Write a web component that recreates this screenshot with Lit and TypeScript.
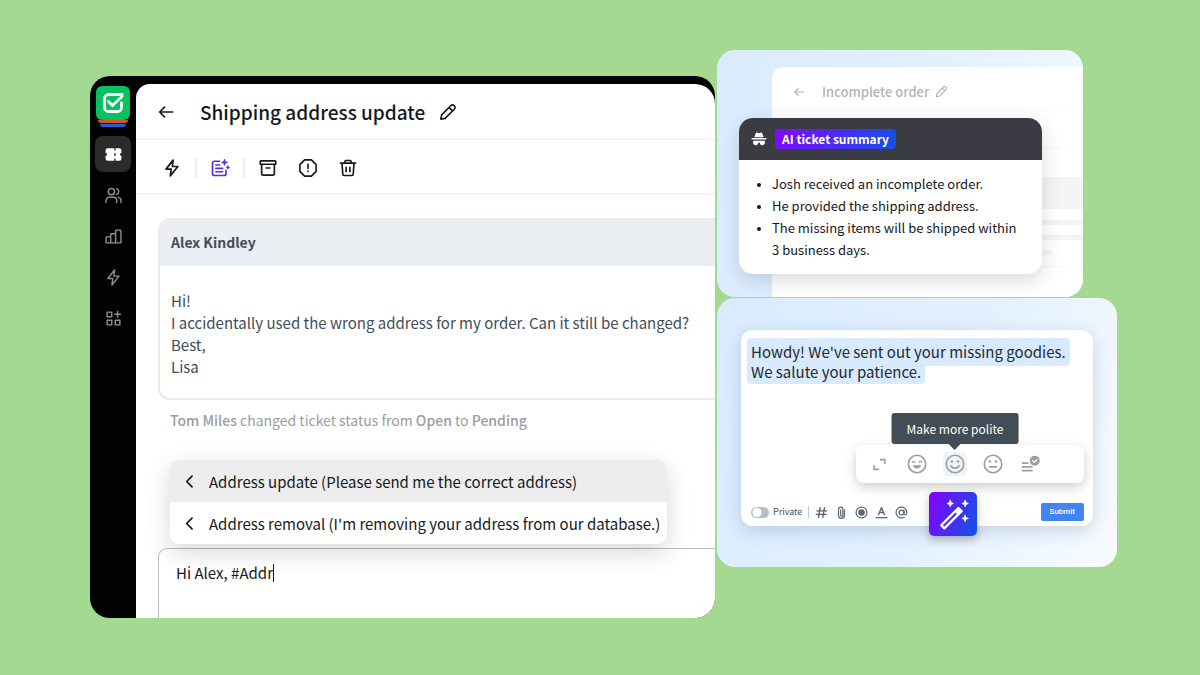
import { LitElement, html, css, svg, nothing } from "lit";
import { customElement, property, state } from "lit/decorators.js";
import { classMap } from "lit/directives/class-map.js";

const glyphs: Record<string, unknown> = {
  back: svg`<path d="M21 12H4M10 5.500L3.500 12l6.500 6.500"/>`,
  pencil: svg`<path d="M2.500 21.500l1-5.700L16 3.300a2.600 2.600 0 0 1 3.700 0l1 1a2.600 2.600 0 0 1 0 3.700L8.200 20.500 2.500 21.500zM13.500 6l4.500 4.500"/>`,
  bolt: svg`<path d="M13.500 1.500L4 13.500h7L9.800 22.500l10-12.500h-7.300z"/>`,
  summary: svg`<path d="M11.500 3H4.500A2.500 2.500 0 0 0 2 5.500v14A2.500 2.500 0 0 0 4.500 22h13a2.500 2.500 0 0 0 2.500-2.500V15M6.500 8h5M6.500 12.500h9M6.500 17h9"/><path d="M18 .5l1.100 2.900L22 4.500l-2.900 1.100L18 8.500l-1.100-2.900L14 4.500l2.900-1.100zM22.500 9l.7 1.600 1.600.7-1.600.7-.7 1.600-.7-1.600-1.600-.7 1.600-.7z" fill="currentColor" stroke-width="1"/>`,
  archive: svg`<path d="M2.500 2.500h19a.8.8 0 0 1 .8.800v3.700H1.700V3.300a.8.8 0 0 1 .8-.8zM3.500 7V19.500a2 2 0 0 0 2 2h13a2 2 0 0 0 2-2V7M9.500 12h5"/>`,
  alert: svg`<path d="M7.500 1.200h9L22.800 7.500v9L16.500 22.800H7.500L1.200 16.500v-9zM12 7v5.500M12 16v.8"/>`,
  trash: svg`<path d="M2 5.500h20M4 5.500l1 14.500a2 2 0 0 0 2 2h10a2 2 0 0 0 2-2l1-14.500M8 5.500V3a1 1 0 0 1 1-1h6a1 1 0 0 1 1 1v2.500M9.500 11v6M14.500 11v6"/>`,
  ticket: svg`<path d="M4.500 4H13v3h1.600V4h4.900A2.500 2.500 0 0 1 22 6.500v3.700a1.800 1.800 0 0 0 0 3.600v3.700a2.500 2.500 0 0 1-2.500 2.500h-4.900v-3H13v3H4.500A2.500 2.500 0 0 1 2 17.500v-3.700a1.800 1.800 0 0 0 0-3.600V6.500A2.500 2.500 0 0 1 4.500 4zM13 10.200v3.600h1.600v-3.600z" fill="currentColor" fill-rule="evenodd" stroke="none"/>`,
  people: svg`<circle cx="9" cy="6.500" r="4.500"/><path d="M1.500 22v-3a4.500 4.500 0 0 1 4.500-4.500h6a4.500 4.500 0 0 1 4.500 4.500v3M16.500 2.300a4.500 4.500 0 0 1 0 8.400M22.500 22v-3a4.500 4.500 0 0 0-3.500-4.300"/>`,
  chart: svg`<path d="M1.500 21V13.500a1 1 0 0 1 1-1h5.500V21zM8 21V9a1 1 0 0 1 1-1h6v13zM15 21V4a1 1 0 0 1 1-1h5.500a1 1 0 0 1 1 1v17z"/>`,
  apps: svg`<path d="M3 3h6.500v6.500H3zM3 14.500h6.500V21H3zM14.500 14.500H21V21h-6.500zM17.800 2v8M13.800 6h8"/>`,
  chevron: svg`<path d="M16 3.500L7.500 12l8.500 8.500"/>`,
  agent: svg`<path d="M7.200 3.200c.6-1.300 1.800-.9 2.600-.4a4 4 0 0 0 4.400 0c.8-.5 2-.9 2.600.4L19 9.500H5zM1 10.500h22v2.200H1zM3.500 14.500h17c1 1.500.5 7-3.700 7-2.500 0-3-2.300-3.500-4h-2.600c-.5 1.700-1 4-3.500 4-4.200 0-4.700-5.500-3.700-7z" fill="currentColor" stroke="none"/>`,
  expand: svg`<path d="M13 3h9v8M11 21H2v-8" stroke-linecap="butt" stroke-linejoin="miter"/>`,
  grin: svg`<circle cx="12" cy="12" r="10.500"/><path d="M6.500 10c.6-1.500 2.200-1.500 2.800 0M14.700 10c.6-1.500 2.200-1.500 2.800 0" stroke-width="1.500"/><path d="M7 13.500h10c-.8 5-9.200 5-10 0z" fill="currentColor" stroke="none"/>`,
  smile: svg`<circle cx="12" cy="12" r="10.500"/><path d="M7 14c1.800 4 8.200 4 10 0"/><circle cx="8.300" cy="9" r="1.600" fill="currentColor" stroke="none"/><circle cx="15.700" cy="9" r="1.600" fill="currentColor" stroke="none"/>`,
  neutral: svg`<circle cx="12" cy="12" r="10.500"/><path d="M8 15.500h8"/><circle cx="8.300" cy="9" r="1.600" fill="currentColor" stroke="none"/><circle cx="15.700" cy="9" r="1.600" fill="currentColor" stroke="none"/>`,
  check: svg`<path d="M1 11h8M1 15.500h13M1 20h13" stroke-linecap="butt"/><circle cx="16.500" cy="8" r="6" fill="currentColor" stroke="none"/><path d="M13.900 8l2 2 3.400-3.600" stroke="#fff" stroke-width="1.500"/>`,
  hash: svg`<path d="M9.500 3L6.500 21M17.500 3l-3 18M3.500 9h18M2.500 15.500h18" stroke-width="2.600"/>`,
  clip: svg`<path d="M17.500 7v10.500a5.500 5.500 0 0 1-11 0V6a4 4 0 0 1 8 0v11a2 2 0 0 1-4 0V7"/>`,
  record: svg`<circle cx="12" cy="12" r="10"/><circle cx="12" cy="12" r="6" fill="currentColor" stroke="none"/>`,
  format: svg`<path d="M6.500 16L12 3l5.500 13M8.500 12h7M2 21.500h20" stroke-width="2.500"/>`,
  at: svg`<circle cx="12" cy="12" r="4.500"/><path d="M16.500 7.500v6c0 4 5.500 3.500 5.500-1.500a10 10 0 1 0-5 8.700"/>`,
  logo: svg`<path d="M20.500 12v4.500a4 4 0 0 1-4 4h-9a4 4 0 0 1-4-4v-9a4 4 0 0 1 4-4h13.500v2l-9.500 9-4-4" stroke-width="2.800" stroke-linejoin="miter"/>`,
  wand: svg`<path d="M2.500 20.300L15.800 7l2.400 2.400L4.900 22.700z" stroke-width="1.800"/><path d="M12.600 9.500l3.300-3.300 3.200 3.200-3.300 3.300z" fill="currentColor" stroke="none"/><path d="M9.500 1l.7 1.800 1.800.7-1.800.7-.7 1.800-.7-1.800L7 3.500l1.800-.7zM21 1l.7 1.800 1.800.7-1.800.7-.7 1.800-.7-1.800-1.800-.7 1.800-.7zM21 12.500l.7 1.800 1.800.7-1.800.7-.7 1.800-.7-1.800-1.800-.7 1.800-.7z" fill="currentColor" stroke-width=".6"/>`,
};

@customElement("ui-icon")
export class UiIcon extends LitElement {
  static styles = css`
    :host { display: inline-flex; flex: none; width: var(--icon, 20px); height: var(--icon, 20px); }
    svg { width: 100%; height: 100%; overflow: visible; fill: none; stroke: currentColor; stroke-width: var(--stroke, 2); stroke-linecap: round; stroke-linejoin: round; }
  `;
  @property() name = "";
  render() {
    return html`<svg viewBox="0 0 24 24" aria-hidden="true">${glyphs[this.name] ?? nothing}</svg>`;
  }
}

const base = css`
  * { box-sizing: border-box; }
  button, input { font: inherit; color: inherit; margin: 0; padding: 0; border: 0; background: none; }
  button { display: inline-flex; align-items: center; justify-content: center; cursor: pointer; }
  h1, h2, p, ul { margin: 0; padding: 0; font-size: inherit; }
  ul { list-style: none; }
`;

@customElement("help-desk")
export class HelpDesk extends LitElement {
  static styles = [base, css`
    :host { display: flex; border-radius: 20px; overflow: hidden; background: #030303; padding-top: 8px; }
    .rail { flex: none; width: 46px; display: flex; flex-direction: column; align-items: center; gap: 5px; padding-top: 2px; color: #8c8e92; --icon: 17px; --stroke: 2; }
    .logo { display: flex; flex-direction: column; align-items: center; margin-bottom: 4px; }
    .mark { display: flex; align-items: center; justify-content: center; width: 34px; height: 34px; border-radius: 6px; background: #07c160; color: #fff; --icon: 24px; }
    .stripe { height: 3px; width: 30px; background: #d9531e; border-radius: 0 0 3px 3px; }
    .blue { width: 26px; background: #2160d4; margin-top: 1px; }
    .item { width: 36px; height: 36px; border-radius: 8px; }
    .active { background: #2b2b2b; color: #fff; --icon: 19px; }
    .main { flex: 1; min-width: 0; background: #fff; border-radius: 14px 20px 0 0; display: flex; flex-direction: column; }
    .top, .tools { flex: none; display: flex; align-items: center; border-bottom: 2px solid #f4f4f5; color: #16181c; padding: 2px 0 0 22px; --icon: 18px; --stroke: 2.2; }
    .top { height: 56px; }
    .back { width: 16px; margin-right: 26px; }
    .title { font-size: 19px; line-height: 28px; font-weight: 500; white-space: nowrap; margin-right: 14px; }
    .tools { height: 55px; padding-left: 27px; gap: 14px; }
    .group { display: flex; gap: 22px; }
    .line { width: 2px; height: 20px; background: #ececee; }
    .purple { color: #5130e8; }
    .body { padding: 23px 0 0 22px; display: flex; flex-direction: column; }
    .message { border: 2px solid #ebecef; border-right: 0; border-radius: 12px 0 0 12px; overflow: hidden; color: #424d57; }
    .from { background: #ebeef2; font-weight: 700; font-size: 14px; line-height: 44px; padding: 0 0 2px 11px; }
    .text { padding: 24px 11px 20px; line-height: 22px; font-size: 15px; white-space: pre-line; }
    .event { margin: 8px 0 28px 12px; font-size: 14px; line-height: 24px; color: #9a9da1; }
    .event b { font-weight: 500; }
    .menu { margin: 0 48px 4px 12px; border-radius: 9px; box-shadow: 0 8px 24px rgba(0, 0, 0, .16); z-index: 1; }
    .options { border-radius: 9px; overflow: hidden; background: #fff; color: #16181c; }
    .option { width: 100%; height: 42px; justify-content: flex-start; gap: 12px; padding-left: 12px; font-size: 15px; white-space: nowrap; --icon: 15px; --stroke: 2.8; }
    .picked { background: #ededee; }
    .composer { display: flex; height: 70px; border: 1px solid #b9bac1; border-width: 1px 0 0 1px; border-radius: 9px 0 0 0; padding: 12px 17px; align-items: flex-start; color: #16181c; }
    .field { field-sizing: content; font-size: 15px; line-height: 24px; height: 24px; outline: 0; }
    .caret { width: 1px; height: 18px; margin-top: 3px; background: #16181c; }
  `];
  @state() private nav = "Tickets";
  @state() private picked = 0;
  private items = [["Tickets", "ticket"], ["Customers", "people"], ["Reports", "chart"], ["Automation", "bolt"], ["Apps", "apps"]];
  private replies = ["Address update (Please send me the correct address)", "Address removal (I'm removing your address from our database.)"];
  render() {
    return html`
      <nav class="rail">
        <div class="logo"><span class="mark"><ui-icon name="logo"></ui-icon></span><span class="stripe"></span><span class="stripe blue"></span></div>
        ${this.items.map(([label, icon]) => html`<button class=${classMap({ item: true, active: this.nav === label })} aria-label=${label} @click=${() => (this.nav = label)}><ui-icon name=${icon}></ui-icon></button>`)}
      </nav>
      <main class="main">
        <header class="top">
          <button class="back" aria-label="Back"><ui-icon name="back"></ui-icon></button>
          <h1 class="title">Shipping address update</h1>
          <button aria-label="Edit title"><ui-icon name="pencil"></ui-icon></button>
        </header>
        <div class="tools">
          <button aria-label="Automate"><ui-icon name="bolt"></ui-icon></button><span class="line"></span>
          <button class="purple" aria-label="Summarize"><ui-icon name="summary"></ui-icon></button><span class="line"></span>
          <div class="group">
            <button aria-label="Archive"><ui-icon name="archive"></ui-icon></button>
            <button aria-label="Report spam"><ui-icon name="alert"></ui-icon></button>
            <button aria-label="Delete"><ui-icon name="trash"></ui-icon></button>
          </div>
        </div>
        <div class="body">
          <article class="message">
            <h2 class="from">Alex Kindley</h2>
            <p class="text">${"Hi!\nI accidentally used the wrong address for my order. Can it still be changed?\nBest,\nLisa"}</p>
          </article>
          <p class="event"><b>Tom Miles</b> changed ticket status from <b>Open</b> to <b>Pending</b></p>
          <div class="menu"><ul class="options">
            ${this.replies.map((text, i) => html`<li><button class=${classMap({ option: true, picked: this.picked === i })} @click=${() => (this.picked = i)}><ui-icon name="chevron"></ui-icon>${text}</button></li>`)}
          </ul></div>
          <div class="composer"><input class="field" aria-label="Reply" value="Hi Alex, #Addr"><span class="caret"></span></div>
        </div>
      </main>`;
  }
}

@customElement("summary-panel")
export class SummaryPanel extends LitElement {
  static styles = [base, css`
    :host { display: grid; border-radius: 18px; overflow: hidden; background: linear-gradient(100deg, #d9ebff, #e2f1ff 55%, #f3f9ff); }
    .ghost, .card { grid-area: 1 / 1; }
    .ghost { margin: 17px 0 0 55px; border-radius: 12px 0 0 0; background: #fff; display: flex; flex-direction: column; overflow: hidden; }
    .head { height: 44px; flex: none; display: flex; align-items: center; padding: 6px 0 0 21px; color: #b4b5b7; border-bottom: 1px solid #f7f7f7; }
    .back { --icon: 12px; --stroke: 2.4; margin-right: 17px; }
    .title { font-size: 13px; line-height: 20px; font-weight: 500; margin-right: 6px; }
    .edit { --icon: 13px; --stroke: 2.2; }
    .row { flex: none; height: 37px; border-bottom: 1px solid #f7f7f7; }
    .band { flex: none; height: 32px; margin-top: 29px; background: #f4f4f5; }
    .bars { display: flex; flex-direction: column; gap: 10px; padding: 11px 0; border-bottom: 1px solid #f7f7f7; }
    .bar { height: 5px; background: #f4f4f5; border-radius: 0 3px 3px 0; }
    .short { width: 90%; }
    .card { margin: 68px 41px 23px 22px; border-radius: 14px; background: #fff; box-shadow: 0 6px 20px rgba(0, 0, 0, .15); overflow: hidden; }
    .bar-top { height: 42px; background: #3b3b43; display: flex; align-items: center; gap: 8px; padding-left: 12px; color: #fff; --icon: 16px; }
    .badge { padding: 0 7px; border-radius: 4px; font-size: 12px; line-height: 20px; font-weight: 700; background: linear-gradient(100deg, #8108ff, #164fe6); }
    .list { padding: 13px 20px 13px 33px; font-size: 13px; line-height: 22px; color: #16181c; list-style: disc; }
    .list li::marker { font-size: 10px; }
  `];
  render() {
    return html`
      <div class="ghost">
        <div class="head">
          <button class="back" aria-label="Back"><ui-icon name="back"></ui-icon></button>
          <h2 class="title">Incomplete order</h2>
          <button class="edit" aria-label="Edit title"><ui-icon name="pencil"></ui-icon></button>
        </div>
        <div class="row"></div><div class="band"></div>
        <div class="bars"><div class="bar"></div><div class="bar"></div><div class="bar short"></div></div>
      </div>
      <section class="card">
        <div class="bar-top"><ui-icon name="agent"></ui-icon><span class="badge">AI ticket summary</span></div>
        <ul class="list">
          <li>Josh received an incomplete order.</li>
          <li>He provided the shipping address.</li>
          <li>The missing items will be shipped within 3 business days.</li>
        </ul>
      </section>`;
  }
}

@customElement("reply-panel")
export class ReplyPanel extends LitElement {
  static styles = [base, css`
    :host { display: block; border-radius: 18px; padding: 32px 24px 41px; background: linear-gradient(110deg, #d9ebff, #e2f1ff 55%, #f8fbff); }
    .editor { position: relative; background: #fff; border-radius: 12px; box-shadow: 0 5px 18px rgba(40, 70, 110, .2); display: flex; flex-direction: column; padding: 8px 9px 5px 6px; }
    .draft { outline: 0; font-size: 15px; line-height: 20px; color: #24292f; min-height: 107px; display: flex; flex-direction: column; align-items: flex-start; }
    .draft mark { color: inherit; background: #d8eaff; border-radius: 4px; padding: 0 4px 2px; }
    .draft .first { padding: 4px; margin-bottom: -4px; z-index: 1; }
    .tones { align-self: flex-end; width: 228px; height: 38px; border-radius: 8px; background: #fff; box-shadow: 0 4px 12px rgba(0, 0, 0, .2); display: flex; align-items: center; gap: 14px; padding-left: 11px; color: #9b9fa5; --icon: 20px; }
    .tone { position: relative; width: 24px; height: 24px; border-radius: 4px; }
    .small { --icon: 13px; --stroke: 3; }
    .on { background: #f1f4f6; }
    .tip { position: absolute; bottom: 32px; left: 50%; transform: translateX(-50%); padding: 0 15px; border-radius: 3px; background: #434d56; color: #fff; font-size: 12px; line-height: 31px; white-space: nowrap; }
    .tip::after { content: ""; position: absolute; top: 100%; left: 50%; margin-left: -6px; border: 6px solid transparent; border-top-color: #434d56; border-bottom: 0; }
    .foot { display: flex; align-items: center; margin-top: 20px; padding-left: 4px; color: #5d6670; --icon: 13px; --stroke: 2.2; }
    .private { display: flex; align-items: center; gap: 4px; font-size: 9px; line-height: 14px; color: #48525c; }
    .switch { appearance: none; width: 18px; height: 11px; border-radius: 6px; background: radial-gradient(circle at 6px 50%, #fff 4px, #b5bfca 5px); }
    .rule { width: 1px; height: 12px; background: #c5cad0; margin: 0 6px; }
    .icons { display: flex; gap: 7px; }
    .submit { margin-left: auto; padding: 0 9px; border-radius: 2px; background: #4384f5; color: #fff; font: 500 8px/18px Roboto, sans-serif; }
    .wand { position: absolute; left: 188px; bottom: -10px; width: 48px; height: 44px; border-radius: 5px; background: linear-gradient(110deg, #8600ff, #0f55e4); color: #fff; box-shadow: 0 4px 10px rgba(0, 0, 0, .25); --icon: 31px; }
  `];
  @state() private tone = "Make more polite";
  private tones = [["Expand", "expand"], ["Make more cheerful", "grin"], ["Make more polite", "smile"], ["Make more neutral", "neutral"], ["Fix grammar", "check"]];
  private actions = [["Canned response", "hash"], ["Attach file", "clip"], ["Record", "record"], ["Formatting", "format"], ["Mention", "at"]];
  render() {
    return html`
      <div class="editor">
        <div class="draft" role="textbox" aria-multiline="true" aria-label="Reply" contenteditable="true"><mark class="first">Howdy! We've sent out your missing goodies.</mark><mark>We salute your patience.</mark></div>
        <div class="tones">
          ${this.tones.map(([label, icon]) => html`<button class=${classMap({ tone: true, on: this.tone === label, small: icon === "expand" })} aria-label=${label} @click=${() => (this.tone = label)}><ui-icon name=${icon}></ui-icon>${this.tone === label ? html`<span class="tip">${label}</span>` : nothing}</button>`)}
        </div>
        <div class="foot">
          <label class="private"><input class="switch" type="checkbox">Private</label><span class="rule"></span>
          <div class="icons">${this.actions.map(([label, icon]) => html`<button aria-label=${label}><ui-icon name=${icon}></ui-icon></button>`)}</div>
          <button class="submit">Submit</button>
        </div>
        <button class="wand" aria-label="Rewrite with AI"><ui-icon name="wand"></ui-icon></button>
      </div>`;
  }
}

@customElement("app-root")
export class AppRoot extends LitElement {
  static styles = css`
    :host { display: grid; grid-template-columns: 625fr 400fr; gap: 2px; align-items: start; box-sizing: border-box; min-height: 100vh; padding: 50px 83px 50px 90px; background: #a3d990; font-family: "Noto Sans CJK SC", "Noto Sans", sans-serif; }
    .desk { margin-top: 26px; }
    .side { display: flex; flex-direction: column; gap: 1px; }
    .summary { margin-right: 34px; }
  `;
  render() {
    return html`<help-desk class="desk"></help-desk>
      <div class="side"><summary-panel class="summary"></summary-panel><reply-panel></reply-panel></div>`;
  }
}
